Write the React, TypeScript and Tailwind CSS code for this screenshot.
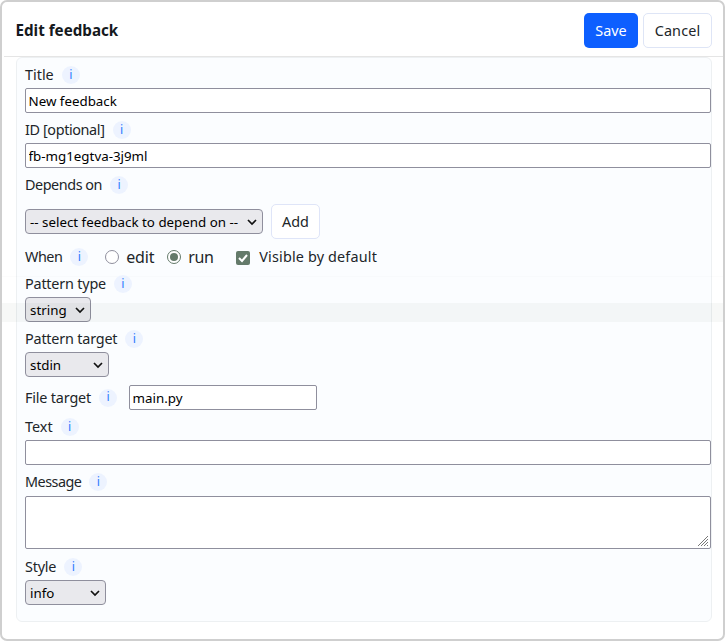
import type { ReactNode } from "react";

function Info() {
  return (
    <span className="flex h-[18px] w-[18px] shrink-0 items-center justify-center rounded-full bg-[#edf3ff] text-[12.5px] leading-none text-[#2f7bff]">
      i
    </span>
  );
}

function Label({ text, spacing, className = "" }: { text: string; spacing: string; className?: string }) {
  return (
    <div className={`flex h-[26px] items-center ${className}`}>
      <Caption text={text} spacing={spacing} />
      <Info />
    </div>
  );
}

function Caption({ text, spacing }: { text: string; spacing: string }) {
  return (
    <span className={`${spacing} mr-2 shrink-0 whitespace-nowrap text-[14.4px] leading-5 text-[#212529]`}>{text}</span>
  );
}

function Field({ value, className = "w-[686px]" }: { value: string; className?: string }) {
  return (
    <input
      defaultValue={value}
      className={`block h-[25px] shrink-0 rounded-[2px] border border-[#8f8f9d] bg-white px-[2.5px] text-[13.333px] text-black outline-none ${className}`}
    />
  );
}

function Select({ className, children }: { className: string; children: ReactNode }) {
  return (
    <button
      className={`flex h-[25px] shrink-0 items-center justify-between whitespace-nowrap rounded-[4px] border border-[#8f8f9d] bg-[#e9e9ed] pl-[4px] pr-[5px] text-[13.333px] leading-none text-black ${className}`}
    >
      <span className="pt-[2px]">{children}</span>
      <svg width="10" height="8" viewBox="0 0 10 8" fill="none" stroke="#111" strokeWidth="1.7">
        <path d="M1 2l4 4 4-4" />
      </svg>
    </button>
  );
}

function Radio({ checked }: { checked?: boolean }) {
  return (
    <span
      className={`flex h-[14px] w-[14px] shrink-0 items-center justify-center rounded-full border bg-white ${checked ? "border-[#647a6a]" : "border-[#8f8f9d]"}`}
    >
      {checked && <span className="h-2 w-2 rounded-full bg-[#647a6a]" />}
    </span>
  );
}

export default function App() {
  return (
    <div className="relative h-[641px] w-[725px] overflow-hidden rounded-[7px] border-2 border-[#cfcfcf] bg-white font-['Noto_Sans',sans-serif] text-[#212529]">
      <header className="ml-[2px] flex h-[55px] items-center justify-between border-b border-[#e5e5e5] pl-[11.5px] pr-[11px] pt-[3px]">
        <h1 className="pb-px text-[15.2px] font-bold leading-5 text-[#15191d]">Edit feedback</h1>
        <div className="flex gap-[5px] text-[14.4px]">
          <button className="h-[35px] w-[54px] rounded-[5px] bg-[#0d5fff] text-white">Save</button>
          <button className="h-[35px] w-[69px] rounded-[5px] border border-[#dee5f6] bg-white tracking-[0.15px]">Cancel</button>
        </div>
      </header>
      <main className="ml-[14px] h-[565px] w-[696px] rounded-[6px] border border-[#edf0f2] bg-[#fbfdff]">
        <div className="relative z-10 flex flex-col pl-2 pt-1">
          <Label text="Title" spacing="tracking-[0px]" />
          <Field value="New feedback" />
          <Label text="ID [optional]" spacing="tracking-[-0.38px]" className="mt-1" />
          <Field value="fb-mg1egtva-3j9ml" />
          <Label text="Depends on" spacing="tracking-[-0.45px]" className="mt-1" />
          <div className="mt-[6px] flex h-[35px] items-center gap-2">
            <Select className="w-[238px]">-- select feedback to depend on --</Select>
            <button className="h-[35px] w-[49px] rounded-[5px] border border-[#dfe5f8] bg-white text-[14.4px]">Add</button>
          </div>
          <div className="mt-[5px] flex h-[26px] items-center">
            <Caption text="When" spacing="tracking-[-0.5px]" />
            <Info />
            <label className="ml-[17px] flex w-[62px] items-center gap-[7px] text-[16px] tracking-[-0.2px]">
              <Radio /> <span>edit</span>
            </label>
            <label className="flex w-[69px] items-center gap-[7px] text-[16px] tracking-[-0.4px]">
              <Radio checked /> <span>run</span>
            </label>
            <label className="flex items-center gap-[9px] text-[14.4px] tracking-[0.16px]">
              <svg className="relative top-px" width="14" height="14" viewBox="0 0 14 14" fill="none">
                <rect width="14" height="14" rx="2" fill="#647a6a" />
                <path d="M3 7l3 3 5-6" stroke="white" strokeWidth="2" />
              </svg>
              <span>Visible by default</span>
            </label>
          </div>
          <Label text="Pattern type" spacing="tracking-[-0.2px]" className="mt-px" />
          <Select className="w-[66px]">string</Select>
          <Label text="Pattern target" spacing="tracking-[-0.2px]" className="mt-1" />
          <Select className="w-[84px]">stdin</Select>
          <div className="mt-2 flex h-[25px] items-center">
            <Caption text="File target" spacing="tracking-[-0.18px]" />
            <Info />
            <Field value="main.py" className="ml-3 w-[188px]" />
          </div>
          <Label text="Text" spacing="tracking-[0px]" className="mt-1" />
          <Field value="" />
          <Label text="Message" spacing="tracking-[-0.52px]" className="mt-1" />
          <div className="mt-px flex h-[53px] w-[686px] items-end justify-end rounded-[2px] border border-[#8f8f9d] bg-white p-[2px]">
            <svg width="10" height="10" viewBox="0 0 10 10" stroke="#777" strokeWidth="1">
              <path d="M0 10L10 0M3 10l7-7M6 10l4-4M9 10l1-1" />
            </svg>
          </div>
          <Label text="Style" spacing="tracking-[-0.2px]" className="mt-[5px]" />
          <Select className="w-[81px]">info</Select>
        </div>
      </main>
      <div className="pointer-events-none absolute left-0 top-[301px] z-20 h-[19px] w-[721px] bg-[#203020]/[0.035]" />
      <div className="pointer-events-none absolute left-0 top-[274px] h-px w-[721px] bg-black/[0.01]" />
    </div>
  );
}
